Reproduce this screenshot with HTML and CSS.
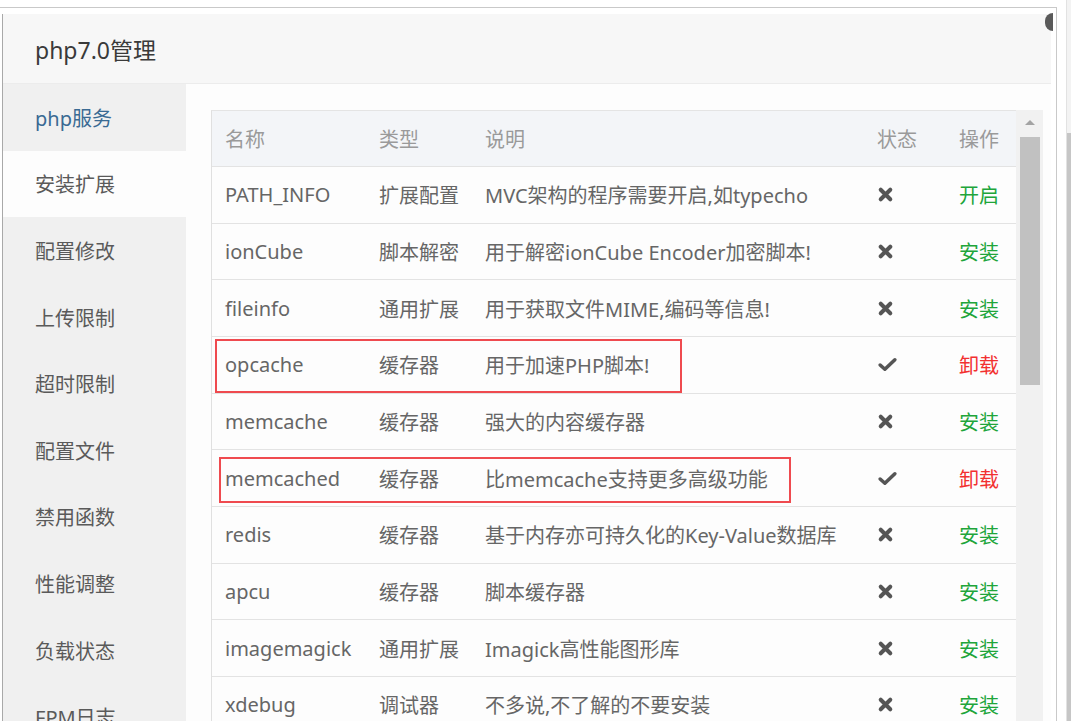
FILE: index.html
```html
<!DOCTYPE html>
<html lang="zh-CN">
<head>
<meta charset="utf-8">
<title>php7.0管理</title>
<link rel="stylesheet" href="styles.css">
</head>
<body>
<div class="screen">
  <div class="frame">
    <div class="dialog">
      <div class="dlg-head">php7.0管理</div>
      <span class="close-btn"></span>
      <div class="dlg-body">
        <ul class="side">
          <li class="side-item first">php服务</li>
          <li class="side-item active">安装扩展</li>
          <li class="side-item">配置修改</li>
          <li class="side-item">上传限制</li>
          <li class="side-item">超时限制</li>
          <li class="side-item">配置文件</li>
          <li class="side-item">禁用函数</li>
          <li class="side-item">性能调整</li>
          <li class="side-item">负载状态</li>
          <li class="side-item">FPM日志</li>
        </ul>
        <div class="content">
          <div class="table-wrap">
            <div class="grid">
              <div class="row head">
                <span class="c">名称</span><span class="c">类型</span><span class="c">说明</span><span class="c">状态</span><span class="c">操作</span>
              </div>
              <div class="row">
                <span class="c">PATH_INFO</span><span class="c">扩展配置</span><span class="c">MVC架构的程序需要开启,如typecho</span>
                <span class="c"><svg class="ico" viewBox="0 0 16 16"><path d="M3.5 3.5L12.5 12.5M12.5 3.5L3.5 12.5"/></svg></span><span class="c act green">开启</span>
              </div>
              <div class="row">
                <span class="c">ionCube</span><span class="c">脚本解密</span><span class="c">用于解密ionCube Encoder加密脚本!</span>
                <span class="c"><svg class="ico" viewBox="0 0 16 16"><path d="M3.5 3.5L12.5 12.5M12.5 3.5L3.5 12.5"/></svg></span><span class="c act green">安装</span>
              </div>
              <div class="row">
                <span class="c">fileinfo</span><span class="c">通用扩展</span><span class="c">用于获取文件MIME,编码等信息!</span>
                <span class="c"><svg class="ico" viewBox="0 0 16 16"><path d="M3.5 3.5L12.5 12.5M12.5 3.5L3.5 12.5"/></svg></span><span class="c act green">安装</span>
              </div>
              <div class="row">
                <span class="c">opcache</span><span class="c">缓存器</span><span class="c">用于加速PHP脚本!</span>
                <span class="c"><svg class="ico chk" viewBox="0 0 20 16"><path d="M3 8.5L7.5 12.5L17 3.5"/></svg></span><span class="c act red">卸载</span>
              </div>
              <div class="row">
                <span class="c">memcache</span><span class="c">缓存器</span><span class="c">强大的内容缓存器</span>
                <span class="c"><svg class="ico" viewBox="0 0 16 16"><path d="M3.5 3.5L12.5 12.5M12.5 3.5L3.5 12.5"/></svg></span><span class="c act green">安装</span>
              </div>
              <div class="row">
                <span class="c">memcached</span><span class="c">缓存器</span><span class="c">比memcache支持更多高级功能</span>
                <span class="c"><svg class="ico chk" viewBox="0 0 20 16"><path d="M3 8.5L7.5 12.5L17 3.5"/></svg></span><span class="c act red">卸载</span>
              </div>
              <div class="row">
                <span class="c">redis</span><span class="c">缓存器</span><span class="c">基于内存亦可持久化的Key-Value数据库</span>
                <span class="c"><svg class="ico" viewBox="0 0 16 16"><path d="M3.5 3.5L12.5 12.5M12.5 3.5L3.5 12.5"/></svg></span><span class="c act green">安装</span>
              </div>
              <div class="row">
                <span class="c">apcu</span><span class="c">缓存器</span><span class="c">脚本缓存器</span>
                <span class="c"><svg class="ico" viewBox="0 0 16 16"><path d="M3.5 3.5L12.5 12.5M12.5 3.5L3.5 12.5"/></svg></span><span class="c act green">安装</span>
              </div>
              <div class="row">
                <span class="c">imagemagick</span><span class="c">通用扩展</span><span class="c">Imagick高性能图形库</span>
                <span class="c"><svg class="ico" viewBox="0 0 16 16"><path d="M3.5 3.5L12.5 12.5M12.5 3.5L3.5 12.5"/></svg></span><span class="c act green">安装</span>
              </div>
              <div class="row">
                <span class="c">xdebug</span><span class="c">调试器</span><span class="c">不多说,不了解的不要安装</span>
                <span class="c"><svg class="ico" viewBox="0 0 16 16"><path d="M3.5 3.5L12.5 12.5M12.5 3.5L3.5 12.5"/></svg></span><span class="c act green">安装</span>
              </div>
              <span class="mark mark-opcache"></span>
              <span class="mark mark-memcached"></span>
            </div>
            <div class="vscroll">
              <span class="vs-up"></span>
              <span class="vs-thumb"></span>
            </div>
          </div>
        </div>
      </div>
    </div>
  </div>
  <div class="strip">
    <span class="strip-bar"></span>
  </div>
</div>
</body>
</html>
```

FILE: styles.css
```css
html, body {
  margin: 0;
  padding: 0;
  background: #ffffff;
  overflow: hidden;
}

.screen {
  width: 1071px;
  height: 721px;
  display: flex;
  overflow: hidden;
  font-family: "Noto Sans", "Noto Sans CJK SC", sans-serif;
}

.frame {
  margin-top: 7px;
  width: 1057px;
  height: 714px;
  border-top: 1px solid #c9c9c9;
  border-right: 1px solid #c9c9c9;
  padding: 6px 0 0 2px;
  box-sizing: border-box;
  overflow: hidden;
  flex: none;
}

.dialog {
  position: relative;
  width: 1048px;
  height: 760px;
  border-left: 1px solid #a9a9a9;
  background: #fdfdfd;
  display: flex;
  flex-direction: column;
}

.dlg-head {
  height: 69px;
  border-bottom: 1px solid #ececec;
  background: #f7f7f7;
  padding-left: 32px;
  display: flex;
  align-items: center;
  font-size: 23px;
  color: #3a3a3a;
  flex: none;
}

.close-btn {
  position: absolute;
  top: -1px;
  right: -2px;
  width: 8px;
  height: 18px;
  border-radius: 9px 0 0 9px;
  background: #5a5a5a;
}

.dlg-body {
  display: flex;
  flex: 1;
}

.side {
  list-style: none;
  margin: 0;
  padding: 0;
  width: 183px;
  background: #f0f0f0;
  flex: none;
}

.side-item {
  height: 66.6px;
  display: flex;
  align-items: center;
  padding-left: 32px;
  font-size: 20px;
  color: #5a5a5a;
}

.side-item.first {
  color: #3a6a93;
}

.side-item.active {
  background: #fdfdfd;
}

.content {
  flex: 1;
  padding: 26px 7px 0 25px;
  background: #fdfdfd;
}

.table-wrap {
  display: flex;
  height: 680px;
}

.grid {
  position: relative;
  width: 805px;
  border-left: 1px solid #e0e0e0;
  border-top: 1px solid #e4e4e4;
  box-sizing: border-box;
  flex: none;
}

.row {
  display: grid;
  grid-template-columns: 153px 106px 392px 82px 71px;
  height: 56.67px;
  border-bottom: 1px solid #e3e3e3;
  box-sizing: border-box;
  align-items: center;
  background: #fdfdfd;
  font-size: 20px;
  color: #666;
}

.row.head {
  background: #f3f5f8;
  color: #9a9a9a;
  height: 56px;
}

.c {
  padding-left: 13px;
  white-space: nowrap;
  display: flex;
  align-items: center;
}

.row .c:nth-child(n+2) {
  padding-left: 14px;
}

.ico {
  width: 17px;
  height: 17px;
  fill: none;
  stroke: #555;
  stroke-width: 3.8;
  stroke-linecap: round;
  stroke-linejoin: round;
}

.ico.chk {
  width: 21px;
  height: 17px;
  stroke-width: 3.4;
}

.green {
  color: #20a53a;
}

.red {
  color: #f23030;
}

.mark {
  position: absolute;
  border: 2px solid #ef4a4f;
  box-sizing: border-box;
}

.mark-opcache {
  left: 3px;
  top: 228px;
  width: 467px;
  height: 54px;
}

.mark-memcached {
  left: 7px;
  top: 346px;
  width: 572px;
  height: 46px;
}

.vscroll {
  position: relative;
  width: 27px;
  background: #f1f1f1;
  flex: none;
}

.vs-up {
  position: absolute;
  left: 9px;
  top: 10px;
  width: 0;
  height: 0;
  border-left: 5px solid transparent;
  border-right: 5px solid transparent;
  border-bottom: 5px solid #a3a3a3;
}

.vs-thumb {
  position: absolute;
  left: 4px;
  top: 27px;
  width: 20px;
  height: 248px;
  background: #c1c1c1;
}

.strip {
  flex: 1;
  display: flex;
  justify-content: flex-end;
}

.strip-bar {
  width: 4px;
  border-left: 1px solid #e2e2e2;
  background: linear-gradient(#f3f3f3 0, #f3f3f3 133px, #c6c6c6 133px);
}
```
